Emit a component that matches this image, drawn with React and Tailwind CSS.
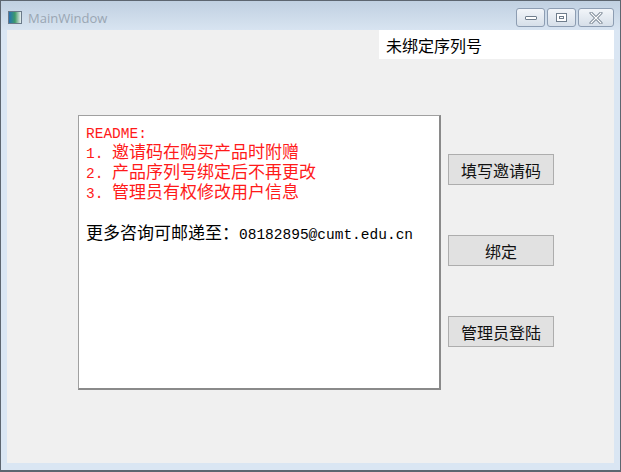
import React from "react";

const cjk = { fontFamily: '"Noto Sans CJK SC", "Liberation Sans", sans-serif' };
const mono = { fontFamily: '"Liberation Mono", "Noto Sans CJK SC", monospace' };

const L = ({ children }) => (
  <span className="text-[14.5px] leading-[16px] whitespace-pre" style={mono}>
    {children}
  </span>
);

const Line = ({ children }) => <div className="h-[20px] leading-[16px] pt-[1px] whitespace-nowrap">{children}</div>;

const CaptionButton = ({ children, wide }) => (
  <div
    className={`flex items-center justify-center h-[19px] ${wide ? "w-[36px]" : "w-[29px]"} rounded-[3px] border border-[#8d9db2] bg-gradient-to-b from-[#f2f5f9] to-[#d6dfe9]`}
  >
    {children}
  </div>
);

const WinButton = ({ label }) => (
  <button
    type="button"
    className="w-[106px] h-[31px] border border-[#adadad] bg-[#e1e1e1] text-[16px] text-[#111] leading-none"
    style={cjk}
  >
    {label}
  </button>
);

export default function App() {
  return (
    <div className="w-[621px] h-[472px] flex flex-col bg-[#dae6f3] border border-[#5d6670] border-b-2 overflow-hidden">
      {/* title bar */}
      <div className="h-[29px] shrink-0 flex items-start bg-gradient-to-b from-[#c0d0e1] to-[#d8e4f1]">
        <div className="ml-[7px] mt-[10px] w-[14px] h-[13px] border border-[#6b7a8a] bg-gradient-to-r from-[#2c6fb0] via-[#3d9a6a] to-[#e8eef4]" />
        <span
          className="ml-[6px] mt-[9px] text-[13px] leading-[16px] text-[#9aa6b3]"
          style={{ fontFamily: '"Open Sans", "Liberation Sans", sans-serif' }}
        >
          MainWindow
        </span>
        <div className="ml-auto mr-[6px] mt-[7px] flex gap-[2px]">
          <CaptionButton>
            <div className="w-[12px] h-[4px] rounded-[1px] border border-[#6f7d8c] bg-white" />
          </CaptionButton>
          <CaptionButton>
            <div className="w-[11px] h-[9px] border border-[#6f7d8c] bg-white flex items-center justify-center">
              <div className="w-[5px] h-[3px] border border-[#6f7d8c]" />
            </div>
          </CaptionButton>
          <CaptionButton wide>
            <svg width="14" height="12" viewBox="0 0 14 12">
              <path d="M2 1 L12 11 M12 1 L2 11" stroke="#6f7d8c" strokeWidth="3" strokeLinecap="round" />
              <path d="M2 1 L12 11 M12 1 L2 11" stroke="#ffffff" strokeWidth="1.2" strokeLinecap="round" />
            </svg>
          </CaptionButton>
        </div>
      </div>

      {/* client area */}
      <div className="flex-1 mx-[6px] bg-[#f0f0f0] flex flex-col">
        <div className="flex justify-end">
          <div className="w-[235px] h-[29px] bg-white flex items-center pl-[7px] text-[16px] text-black" style={cjk}>
            未绑定序列号
          </div>
        </div>

        <div className="flex mt-[56px] ml-[71px]">
          <div
            className="w-[363px] h-[275px] bg-white border border-[#a0a0a0] border-b-2 border-r-2 border-b-[#8a8a8a] border-r-[#8a8a8a] pl-[7px] pt-[6px] text-[17px]"
            style={cjk}
          >
            <div className="text-[#ff1a1a]">
              <Line>
                <L>README:</L>
              </Line>
              <Line>
                <L>1. </L>邀请码在购买产品时附赠
              </Line>
              <Line>
                <L>2. </L>产品序列号绑定后不再更改
              </Line>
              <Line>
                <L>3. </L>管理员有权修改用户信息
              </Line>
            </div>
            <div className="h-[21px]" />
            <div className="text-black">
              <Line>
                更多咨询可邮递至：<L>08182895@cumt.edu.cn</L>
              </Line>
            </div>
          </div>

          <div className="ml-[7px] pt-[39px] flex flex-col gap-[50px]">
            <WinButton label="填写邀请码" />
            <WinButton label="绑定" />
            <WinButton label="管理员登陆" />
          </div>
        </div>
      </div>

      <div className="h-[7px] shrink-0" />
    </div>
  );
}
